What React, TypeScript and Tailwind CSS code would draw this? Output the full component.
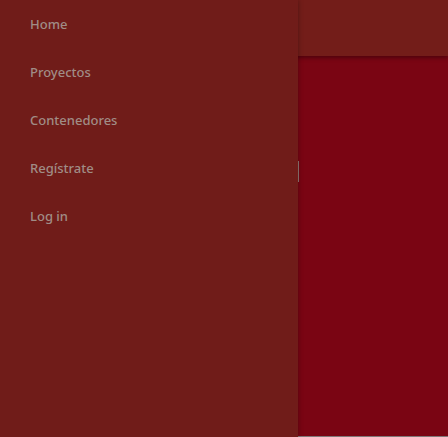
const links = ["Home", "Proyectos", "Contenedores", "Regístrate", "Log in"];

export default function App() {
  return (
    <div className="relative flex min-h-screen flex-col overflow-hidden bg-[#7a0513] font-['Noto_Sans',sans-serif]">
      <header className="z-10 h-14 shrink-0 bg-[#731d19] shadow-[0_2px_4px_rgba(0,0,0,0.35)]" />
      <main className="flex-1 border-b border-[#807878] pt-[105px]">
        <div className="flex w-[299px] justify-end">
          <input
            type="text"
            aria-label="Buscar"
            className="h-[21px] w-40 border border-[#947a76] bg-transparent outline-none"
          />
        </div>
      </main>
      <nav className="absolute inset-y-0 left-0 z-20 w-[298px] max-w-full bg-[#701c19] shadow-[0_0_5px_rgba(0,0,0,0.35)]">
        <ul className="flex flex-col">
          {links.map((label) => (
            <li key={label}>
              <a
                href="#"
                className="block h-12 px-[30px] text-[13px] leading-12 font-medium text-[#a08c86]"
              >
                {label}
              </a>
            </li>
          ))}
        </ul>
      </nav>
    </div>
  );
}
